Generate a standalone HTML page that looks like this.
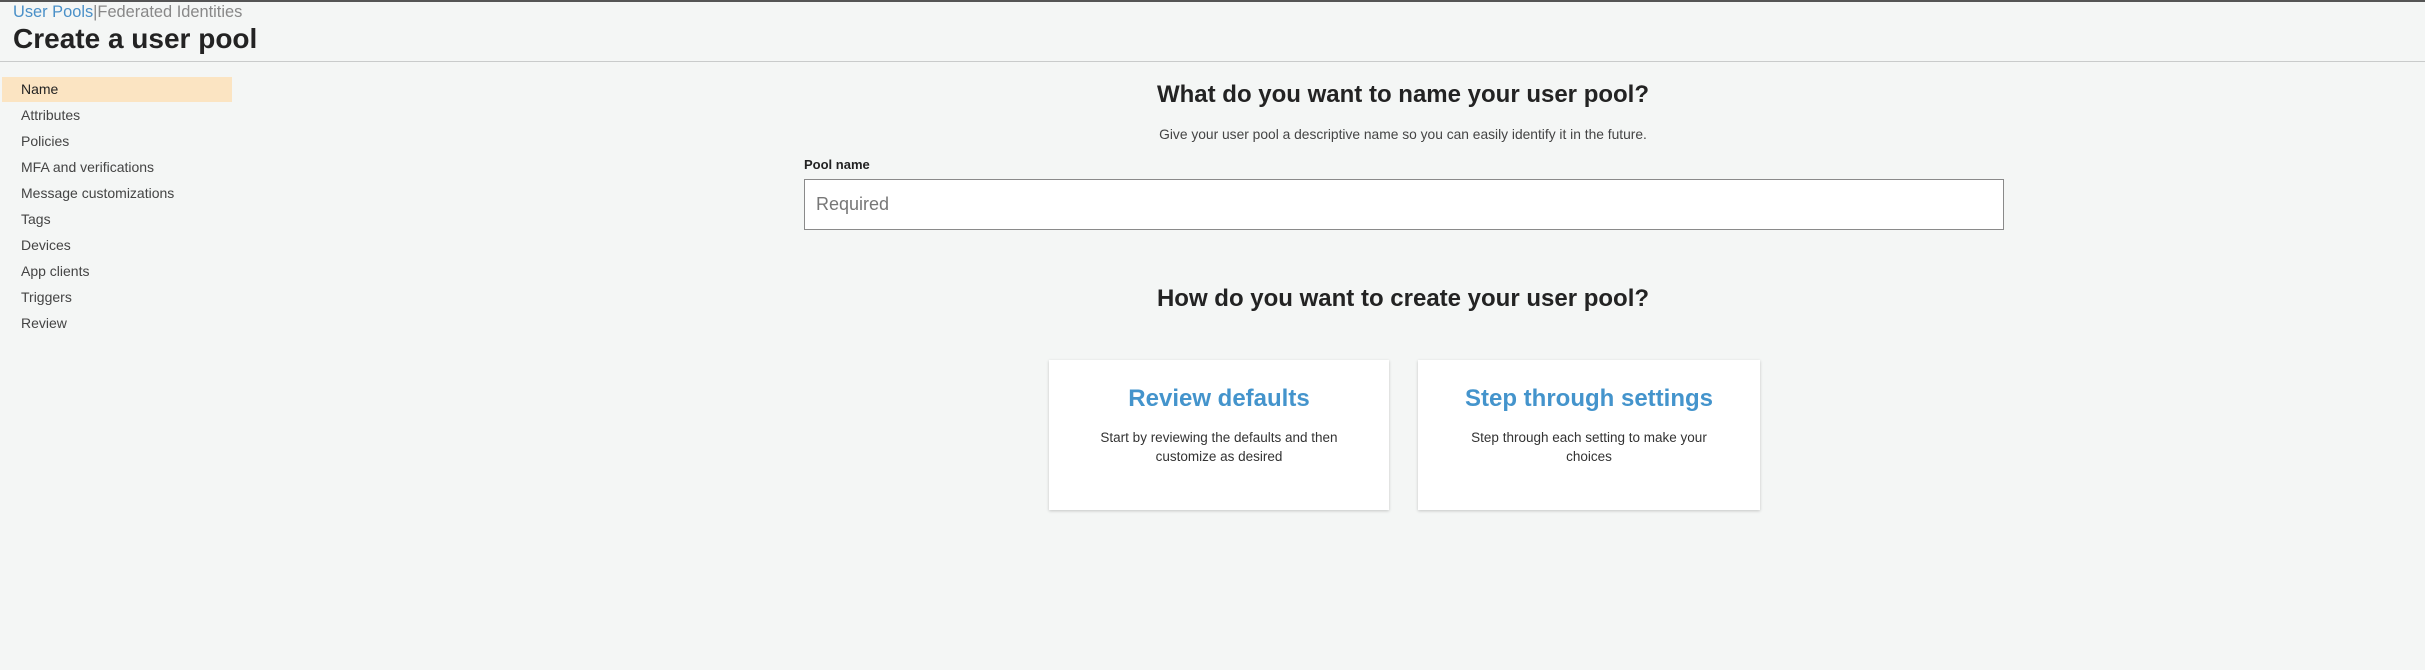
<!DOCTYPE html>
<html><head><meta charset="utf-8"><style>
*{box-sizing:border-box;margin:0;padding:0}
body{width:2425px;height:670px;background:#f4f6f5;font-family:"Liberation Sans",Arial,sans-serif;color:#333;position:relative;overflow:hidden;border-top:2px solid #555}
.a{position:absolute}
.crumb{left:13px;top:1px;font-size:16.4px;color:#888}
.crumb span{color:#4a90c8}
.title{left:13px;top:21px;font-size:28px;font-weight:bold;color:#232323}
.hr{left:0;top:59px;width:2425px;height:1px;background:#c9cbcb}
.hl{left:2px;top:75px;width:230px;height:25px;background:#fbe4c2}
.nav{left:21px;font-size:14px;color:#444}
.h{left:0;width:2806px;text-align:center;font-size:24px;font-weight:bold;color:#232323}
.sub{left:0;width:2806px;top:125px;text-align:center;font-size:13.8px;color:#444}
.lab{left:804px;top:155px;font-size:13px;font-weight:bold;color:#222}
.inp{left:804px;top:177px;width:1200px;height:51px;background:#fff;border:1px solid #8a8a8a;font-size:18px;color:#777;padding:14px 0 0 11px}
.card{top:358px;height:150px;background:#fff;box-shadow:0 1px 3px rgba(0,0,0,.2);text-align:center}
.card b{display:block;font-size:24px;color:#4494cc;margin-top:25px}
.card p{font-size:13.5px;line-height:19px;color:#333;margin:15px auto 0;width:270px}
</style></head><body>
<div class="a crumb"><span>User Pools</span>|Federated Identities</div>
<div class="a title">Create a user pool</div>
<div class="a hr"></div>
<div class="a hl"></div>
<div class="a nav" style="top:79px;color:#222">Name</div>
<div class="a nav" style="top:105px">Attributes</div>
<div class="a nav" style="top:131px">Policies</div>
<div class="a nav" style="top:157px">MFA and verifications</div>
<div class="a nav" style="top:183px">Message customizations</div>
<div class="a nav" style="top:209px">Tags</div>
<div class="a nav" style="top:235px">Devices</div>
<div class="a nav" style="top:261px">App clients</div>
<div class="a nav" style="top:287px">Triggers</div>
<div class="a nav" style="top:313px">Review</div>
<div class="a h" style="top:79px">What do you want to name your user pool?</div>
<div class="a sub">Give your user pool a descriptive name so you can easily identify it in the future.</div>
<div class="a lab">Pool name</div>
<div class="a inp">Required</div>
<div class="a h" style="top:283px">How do you want to create your user pool?</div>
<div class="a card" style="left:1049px;width:340px"><b>Review defaults</b><p>Start by reviewing the defaults and then customize as desired</p></div>
<div class="a card" style="left:1418px;width:342px"><b>Step through settings</b><p>Step through each setting to make your choices</p></div>
</body></html>
